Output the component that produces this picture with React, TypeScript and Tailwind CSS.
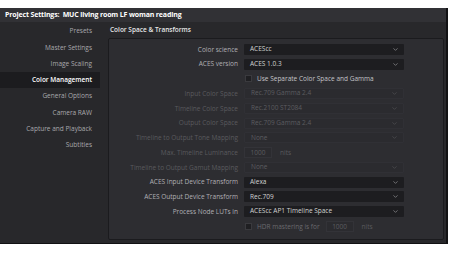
import { ChevronDown } from 'lucide-react';

const sidebar = [
  'Presets',
  'Master Settings',
  'Image Scaling',
  'Color Management',
  'General Options',
  'Camera RAW',
  'Capture and Playback',
  'Subtitles',
];

type Row =
  | { kind: 'select'; label: string; value: string; disabled?: boolean }
  | { kind: 'check'; text: string }
  | { kind: 'nits'; label: string; value: string }
  | { kind: 'hdr' };

const rows: Row[] = [
  { kind: 'select', label: 'Color science', value: 'ACEScc' },
  { kind: 'select', label: 'ACES version', value: 'ACES 1.0.3' },
  { kind: 'check', text: 'Use Separate Color Space and Gamma' },
  { kind: 'select', label: 'Input Color Space', value: 'Rec.709 Gamma 2.4', disabled: true },
  { kind: 'select', label: 'Timeline Color Space', value: 'Rec.2100 ST2084', disabled: true },
  { kind: 'select', label: 'Output Color Space', value: 'Rec.709 Gamma 2.4', disabled: true },
  { kind: 'select', label: 'Timeline to Output Tone Mapping', value: 'None', disabled: true },
  { kind: 'nits', label: 'Max. Timeline Luminance', value: '1000' },
  { kind: 'select', label: 'Timeline to Output Gamut Mapping', value: 'None', disabled: true },
  { kind: 'select', label: 'ACES Input Device Transform', value: 'Alexa' },
  { kind: 'select', label: 'ACES Output Device Transform', value: 'Rec.709' },
  { kind: 'select', label: 'Process Node LUTs in', value: 'ACEScc AP1 Timeline Space' },
  { kind: 'hdr' },
];

function Select({ value, disabled }: { value: string; disabled?: boolean }) {
  return (
    <div
      className={
        'flex items-center justify-between w-[160px] h-[11px] pl-[6px] pr-[5px] rounded-[1px] ' +
        (disabled ? 'bg-[#2b2b2f] border border-[#303035] text-[#5c5c60]' : 'bg-[#1d1d20] text-[#d2d2d2]')
      }
    >
      <span className="leading-none">{value}</span>
      <ChevronDown size={7} strokeWidth={2.5} className={disabled ? 'text-[#4e4e52]' : 'text-[#8c8c90]'} />
    </div>
  );
}

function Box() {
  return <div className="w-[7px] h-[7px] bg-[#1f1f22] border border-[#3a3a3e] ml-[1px]" />;
}

export default function App() {
  return (
    <div className="w-[450px] h-[253px] bg-white pt-[8px] pb-[9px] font-['Open_Sans',sans-serif]">
      <div className="w-[448px] h-[236px] flex flex-col bg-[#28282b] border-r-2 border-b border-[#121214]">
        {/* title bar */}
        <div className="h-[14px] flex items-center px-[5px] bg-[#313135] text-[7px] font-bold text-white tracking-[-0.15px]">
          Project Settings:&nbsp; MUC living room LF woman reading
        </div>

        <div className="flex flex-1">
          {/* sidebar */}
          <div className="w-[100px] pt-[1px] flex flex-col">
            {sidebar.map((s) => (
              <div
                key={s}
                className={
                  'h-[16.3px] flex items-center justify-end pr-[8px] text-[6.5px] ' +
                  (s === 'Color Management' ? 'bg-[#1c1c1f] text-white font-semibold' : 'text-[#a9a9ad]')
                }
              >
                {s}
              </div>
            ))}
          </div>

          {/* main */}
          <div className="flex-1 flex flex-col pl-[8px] pr-[2px]">
            <div className="h-[16px] flex items-center pl-[2px] text-[6.5px] font-semibold text-[#e6e6e6]">
              Color Space &amp; Transforms
            </div>
            <div className="h-[202px] bg-[#2d2d31] border border-[#1b1b1e] rounded-[2px] pt-[3px] text-[6.5px]">
              {rows.map((r, i) => (
                <div key={i} className="h-[14.75px] flex items-center">
                  <div
                    className={
                      'w-[129px] text-right ' +
                      ((r.kind === 'select' && r.disabled) || r.kind === 'nits' ? 'text-[#5a5a5e]' : 'text-[#b0b0b4]')
                    }
                  >
                    {r.kind === 'select' || r.kind === 'nits' ? r.label : ''}
                  </div>
                  <div className="ml-[6px] flex items-center">
                    {r.kind === 'select' && <Select value={r.value} disabled={r.disabled} />}
                    {r.kind === 'check' && (
                      <>
                        <Box />
                        <span className="ml-[5px] text-[#c4c4c8]">{r.text}</span>
                      </>
                    )}
                    {r.kind === 'nits' && (
                      <>
                        <div className="w-[28px] h-[11px] flex items-center justify-center bg-[#2b2b2f] border border-[#333338] text-[#5c5c60]">
                          {r.value}
                        </div>
                        <span className="ml-[8px] text-[#5a5a5e]">nits</span>
                      </>
                    )}
                    {r.kind === 'hdr' && (
                      <>
                        <Box />
                        <span className="ml-[5px] text-[#6a6a6e]">HDR mastering is for</span>
                        <div className="ml-[6px] w-[28px] h-[11px] flex items-center justify-center bg-[#2b2b2f] border border-[#333338] text-[#5c5c60]">
                          1000
                        </div>
                        <span className="ml-[8px] text-[#5a5a5e]">nits</span>
                      </>
                    )}
                  </div>
                </div>
              ))}
            </div>
          </div>
        </div>
      </div>
    </div>
  );
}
